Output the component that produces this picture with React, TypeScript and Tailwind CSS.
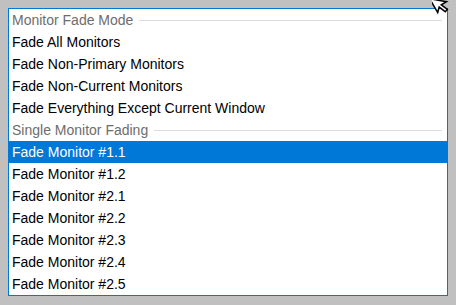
const groups = [
  {
    title: "Monitor Fade Mode",
    items: [
      "Fade All Monitors",
      "Fade Non-Primary Monitors",
      "Fade Non-Current Monitors",
      "Fade Everything Except Current Window",
    ],
  },
  {
    title: "Single Monitor Fading",
    items: [
      "Fade Monitor #1.1",
      "Fade Monitor #1.2",
      "Fade Monitor #2.1",
      "Fade Monitor #2.2",
      "Fade Monitor #2.3",
      "Fade Monitor #2.4",
      "Fade Monitor #2.5",
    ],
  },
];

const selected = "Fade Monitor #1.1";

export default function App() {
  return (
    <div
      className="relative h-[305px] w-[456px] overflow-hidden bg-[#c0c0c0] pl-[8px] pt-[8px]"
      style={{ fontFamily: "Tahoma, 'Liberation Sans', Arial, sans-serif" }}
    >
      <div className="w-[440px] border border-[#0078d7] bg-white text-[14px]">
        {groups.map((g) => (
          <div key={g.title}>
            <div className="flex h-[22px] items-center pl-[3px] pr-[5px] pt-px">
              <span className="text-[#6d6d6d]">{g.title}</span>
              <div className="ml-[6px] h-px flex-1 bg-[#dcdcdc]" />
            </div>
            {g.items.map((it) => (
              <div
                key={it}
                className={
                  it === selected
                    ? "flex h-[22px] items-center bg-[#0078d7] pl-[3px] pt-px text-white"
                    : "flex h-[22px] items-center pl-[3px] pt-px text-black"
                }
              >
                {it}
              </div>
            ))}
          </div>
        ))}
      </div>
      <svg
        className="absolute left-[432px] top-[-8px]"
        width="22"
        height="24"
        viewBox="0 0 22 24"
      >
        <path
          d="M1 1 L1 17 L5 13 L8 20 L11 19 L8 12 L14 12 Z"
          fill="white"
          stroke="black"
          strokeWidth="1.5"
          transform="rotate(-30 10 10)"
        />
      </svg>
    </div>
  );
}
